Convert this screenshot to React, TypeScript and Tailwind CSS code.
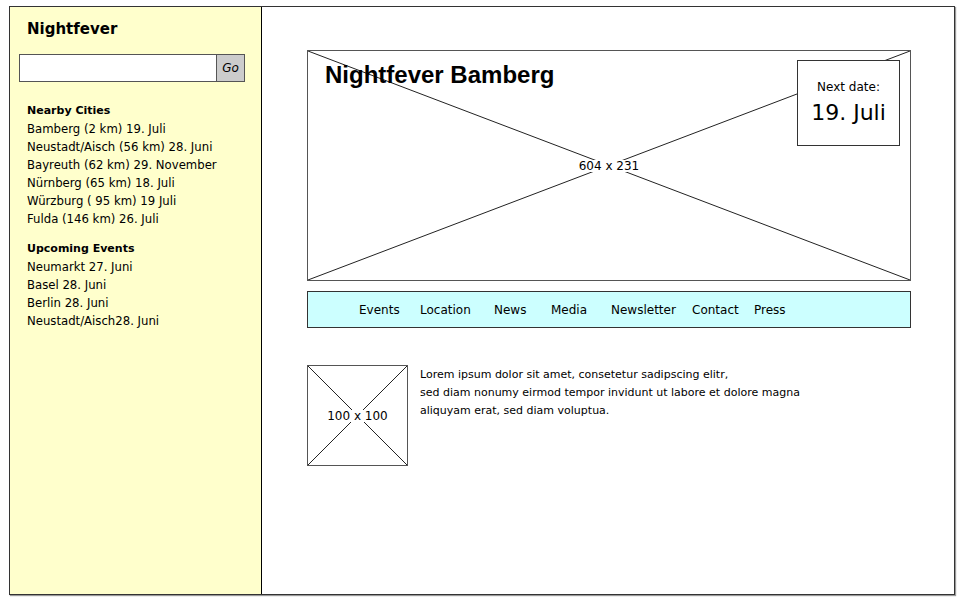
import React from "react";

const hand = "font-['Comic_Sans_MS','DejaVu_Sans',sans-serif]";

const nearby = [
  "Bamberg (2 km) 19. Juli",
  "Neustadt/Aisch (56 km) 28. Juni",
  "Bayreuth (62 km) 29. November",
  "Nürnberg (65 km) 18. Juli",
  "Würzburg ( 95 km) 19 Juli",
  "Fulda (146 km) 26. Juli",
];

const upcoming = ["Neumarkt 27. Juni", "Basel 28. Juni", "Berlin 28. Juni", "Neustadt/Aisch28. Juni"];

const nav = [
  { label: "Events", cls: "w-[61px]" },
  { label: "Location", cls: "w-[74px]" },
  { label: "News", cls: "w-[57px]" },
  { label: "Media", cls: "w-[60px]" },
  { label: "Newsletter", cls: "w-[81px]" },
  { label: "Contact", cls: "w-[62px]" },
  { label: "Press", cls: "w-[60px]" },
];

function Cross({ label }: { label: string }) {
  return (
    <div className="relative h-full w-full">
      <svg className="absolute inset-0 h-full w-full" preserveAspectRatio="none" viewBox="0 0 100 100">
        <line x1="0" y1="0" x2="100" y2="100" stroke="#222" strokeWidth="1" vectorEffect="non-scaling-stroke" />
        <line x1="0" y1="100" x2="100" y2="0" stroke="#222" strokeWidth="1" vectorEffect="non-scaling-stroke" />
      </svg>
      <div className="absolute inset-0 flex items-center justify-center">
        <span className="bg-white px-[1px] font-['DejaVu_Sans',sans-serif] text-[12px] leading-none text-black">{label}</span>
      </div>
    </div>
  );
}

export default function App() {
  return (
    <div className="h-[600px] w-[960px] bg-white pl-[9px] pt-[6px]">
      <div className="flex h-[589px] w-[946px] border border-[#333] shadow-[1px_1px_1px_#999]">
        <aside className={`flex w-[252px] shrink-0 flex-col border-r border-black bg-[#ffffcc] px-[9px] pt-[12px] text-black ${hand}`}>
          <h1 className="pl-[8px] text-[15px] font-bold leading-[20px]">Nightfever</h1>
          <div className="mt-[15px] flex h-[28px] w-[226px]">
            <div className="flex-1 border border-[#555] bg-white" />
            <button className="w-[28px] border border-l-0 border-[#555] bg-[#cccccc] text-[12px] italic">Go</button>
          </div>
          <div className="mt-[20px] pl-[8px] text-[11.7px] leading-[18px]">
            <div className="text-[11px] font-bold">Nearby Cities</div>
            {nearby.map((c) => (
              <div key={c}>{c}</div>
            ))}
            <div className="mt-[12px] text-[11px] font-bold">Upcoming Events</div>
            {upcoming.map((c) => (
              <div key={c}>{c}</div>
            ))}
          </div>
        </aside>
        <main className="flex flex-1 flex-col pl-[45px] pt-[43px]">
          <div className="relative h-[231px] w-[604px] border border-[#555] bg-white">
            <Cross label="604 x 231" />
            <h2 className="absolute left-[17px] top-[9px] font-['Liberation_Sans',Arial,sans-serif] text-[24px] font-bold leading-[30px] text-black">
              Nightfever Bamberg
            </h2>
            <div className={`absolute left-[489px] top-[9px] flex h-[86px] w-[103px] flex-col items-center border border-[#333] bg-white pt-[18px] text-black ${hand}`}>
              <div className="text-[12px] leading-[16px]">Next date:</div>
              <div className="mt-[3px] text-[22px] leading-[30px]">19. Juli</div>
            </div>
          </div>
          <nav className={`mt-[10px] flex h-[37px] w-[604px] items-center border border-[#333] bg-[#ccffff] pl-[51px] text-[12px] text-black ${hand}`}>
            {nav.map((n) => (
              <span key={n.label} className={n.cls}>
                {n.label}
              </span>
            ))}
          </nav>
          <div className="mt-[37px] flex">
            <div className="h-[101px] w-[101px] border border-[#555]">
              <Cross label="100 x 100" />
            </div>
            <p className={`ml-[12px] pt-[1px] text-[11px] leading-[18px] text-black ${hand}`}>
              Lorem ipsum dolor sit amet, consetetur sadipscing elitr,
              <br />
              sed diam nonumy eirmod tempor invidunt ut labore et dolore magna
              <br />
              aliquyam erat, sed diam voluptua.
            </p>
          </div>
        </main>
      </div>
    </div>
  );
}
